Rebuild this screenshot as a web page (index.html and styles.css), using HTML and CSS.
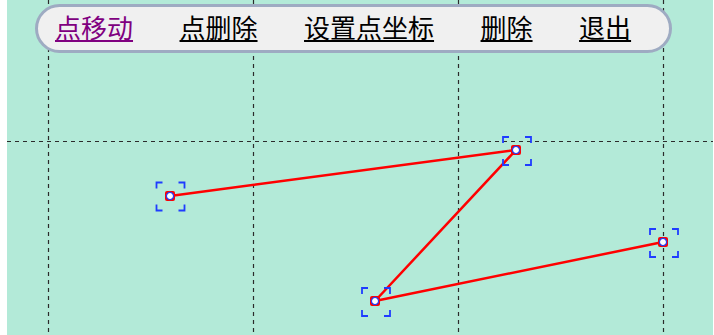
FILE: index.html
```html
<!DOCTYPE html>
<html lang="zh-CN">
  <head>
    <meta charset="UTF-8" />
    <meta name="viewport" content="width=device-width, initial-scale=1.0" />
    <title>点编辑</title>

    <link rel="stylesheet" href="styles.css">
  </head>

  <body>
    <div id="board">
      <svg class="canvas" width="706" height="335" viewBox="0 0 706 335">
        <defs>
          <g id="mark">
            <path class="bracket" d="M-14,-8 V-14 H-8 M8,-14 H14 V-8 M14,8 V14 H8 M-8,14 H-14 V8" />
          </g>
          <g id="dot">
            <rect class="dot-box" x="-5" y="-5" width="10" height="10" rx="2" />
            <circle class="dot" r="3.6" />
          </g>
        </defs>

        <g class="grid">
          <line x1="41.5" y1="0" x2="41.5" y2="335" />
          <line x1="246.5" y1="0" x2="246.5" y2="335" />
          <line x1="451.5" y1="0" x2="451.5" y2="335" />
          <line x1="656.5" y1="0" x2="656.5" y2="335" />
          <line x1="0" y1="141.5" x2="706" y2="141.5" />
        </g>

        <polyline class="path" points="163,196 509,150 368,301 656,242" />

        <use href="#mark" x="163.5" y="196.5" />
        <use href="#mark" x="510" y="151" />
        <use href="#mark" x="369" y="302" />
        <use href="#mark" x="657" y="243" />

        <use href="#dot" x="163" y="196" />
        <use href="#dot" x="509" y="150" />
        <use href="#dot" x="368" y="301" />
        <use href="#dot" x="656" y="242" />
      </svg>

      <div class="toolbar">
        <a href="#" class="visited">点移动</a>
        <a href="#">点删除</a>
        <a href="#">设置点坐标</a>
        <a href="#">删除</a>
        <a href="#">退出</a>
      </div>
    </div>
  </body>
</html>
```

FILE: styles.css
```css
html,
body {
  margin: 0;
  padding: 0;
  background: #fff;
}

#board {
  position: relative;
  margin-left: 7px;
  width: 706px;
  height: 335px;
  background: #b3ead8;
  overflow: hidden;
}

.canvas {
  display: block;
}

.grid line {
  stroke: #2b2b2b;
  stroke-width: 1.2;
  stroke-dasharray: 4 4;
}

.path {
  fill: none;
  stroke: #f00;
  stroke-width: 2.5;
  stroke-linejoin: round;
}

.bracket {
  fill: none;
  stroke: #1f3cff;
  stroke-width: 1.8;
}

.dot-box {
  fill: #f00;
}

.dot {
  fill: #fff;
  stroke: #2a3cf0;
  stroke-width: 1.3;
}

.toolbar {
  position: absolute;
  left: 28px;
  top: 4px;
  width: 637px;
  height: 49px;
  box-sizing: border-box;
  border: 3px solid #9eabc2;
  border-radius: 25px;
  background: #f0f0f0;
  display: flex;
  align-items: center;
  gap: 46.5px;
  padding-left: 17px;
  font-family: "Liberation Sans", "Noto Sans CJK SC", sans-serif;
  font-size: 26px;
}

.toolbar a {
  color: #000;
  text-decoration: underline;
  line-height: 1;
}

.toolbar a.visited {
  color: #800080;
}
```
